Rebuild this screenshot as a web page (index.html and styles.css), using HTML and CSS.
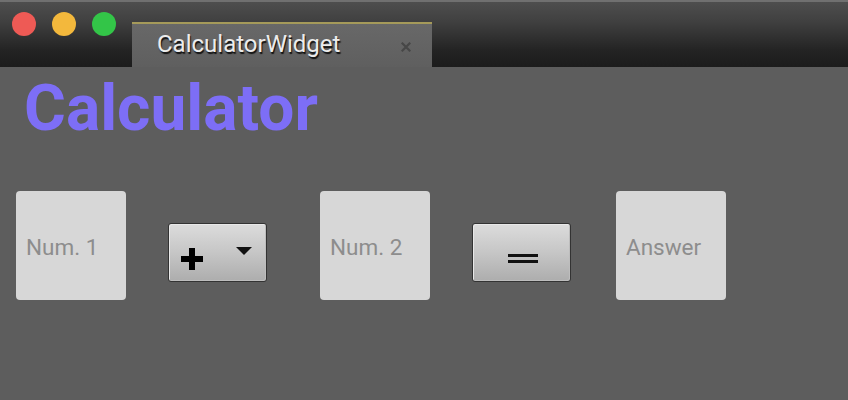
FILE: index.html
```html
<!DOCTYPE html>
<html>
<head>
<meta charset="utf-8">
<link rel="stylesheet" href="styles.css">
</head>
<body>
<div class="window">
  <div class="titlebar">
    <div class="lights">
      <span class="light red"></span>
      <span class="light yellow"></span>
      <span class="light green"></span>
    </div>
    <div class="tab">
      <span class="tab-label">CalculatorWidget</span>
      <svg class="tab-close" width="10" height="10" viewBox="0 0 10 10"><path d="M1.5 1.5 L8.5 8.5 M8.5 1.5 L1.5 8.5" stroke="#474747" stroke-width="2.2" stroke-linecap="square"/></svg>
    </div>
  </div>
  <div class="content">
    <h1 class="title">Calculator</h1>
    <div class="row">
      <div class="field f1">Num. 1</div>
      <div class="btn combo">
        <svg class="plus" width="22" height="22" viewBox="0 0 22 22"><path d="M8 0h6v8h8v6h-8v8h-6v-8h-8v-6h8z" fill="#000"/></svg>
        <svg class="caret" width="16" height="9" viewBox="0 0 16 9"><path d="M0 0h16l-8 8z" fill="#111"/></svg>
      </div>
      <div class="field f2">Num. 2</div>
      <div class="btn equals">
        <svg width="30" height="10" viewBox="0 0 30 10"><rect x="0" y="0" width="30" height="3" fill="#111"/><rect x="0" y="6" width="30" height="3" fill="#111"/></svg>
      </div>
      <div class="field f3">Answer</div>
    </div>
  </div>
</div>
</body>
</html>
```

FILE: styles.css
```css
html, body {
  margin: 0;
  padding: 0;
  background: #5d5d5d;
}
body {
  font-family: Roboto, "Liberation Sans", sans-serif;
  width: 848px;
  height: 400px;
  overflow: hidden;
}
.titlebar {
  height: 67px;
  box-sizing: border-box;
  border-top: 2px solid #707070;
  background: linear-gradient(#4e4e4e 0%, #404040 30%, #232323 75%, #1c1c1c 100%);
  display: flex;
  align-items: flex-end;
  position: relative;
}
.lights {
  position: absolute;
  left: 12px;
  top: 10px;
  display: flex;
  gap: 16px;
}
.light {
  width: 24px;
  height: 24px;
  border-radius: 50%;
  display: block;
}
.red { background: #ee5a55; }
.yellow { background: #f3b83c; }
.green { background: #33c548; }
.tab {
  margin-left: 132px;
  width: 300px;
  height: 45px;
  box-sizing: border-box;
  border-top: 2px solid #a59a5a;
  background: linear-gradient(#686868, #5f5f5f);
  display: flex;
  align-items: center;
  padding-left: 25px;
  padding-right: 21px;
}
.tab-label {
  flex: 1;
  color: #ececec;
  font-size: 24px;
  text-shadow: 1px 2px 1px #111;
  margin-top: -4px;
}
.tab-close {
  margin-top: 2px;
}
.content {
  padding: 0 16px;
}
.title {
  margin: 0;
  padding-left: 8px;
  font-size: 64px;
  font-weight: 700;
  color: #7d6ef6;
  line-height: 84px;
  height: 124px;
}
.row {
  display: flex;
  align-items: flex-start;
}
.field {
  width: 110px;
  height: 109px;
  box-sizing: border-box;
  background: #d7d7d7;
  border-radius: 4px;
  color: #8d8d8d;
  font-size: 22.5px;
  display: flex;
  align-items: center;
  padding-left: 10px;
  padding-top: 2px;
}
.f2 { margin-left: 53px; }
.f3 { margin-left: 45px; }
.btn {
  margin-top: 32px;
  margin-left: 42px;
  width: 99px;
  height: 59px;
  box-sizing: border-box;
  border: 1px solid #333;
  border-radius: 3px;
  background: linear-gradient(#dcdcdc, #c6c6c6 50%, #adadad);
  box-shadow: inset 1px 1px 0 #e8e8e8, inset -1px -1px 0 #bdbdbd;
  display: flex;
  align-items: center;
}
.combo {
  padding: 0 14px 0 12px;
  justify-content: space-between;
}
.combo .plus { margin-top: 12px; }
.combo .caret { margin-top: -2px; }
.equals {
  justify-content: center;
}
.equals svg { margin-top: 12px; margin-left: 2px; }
```
